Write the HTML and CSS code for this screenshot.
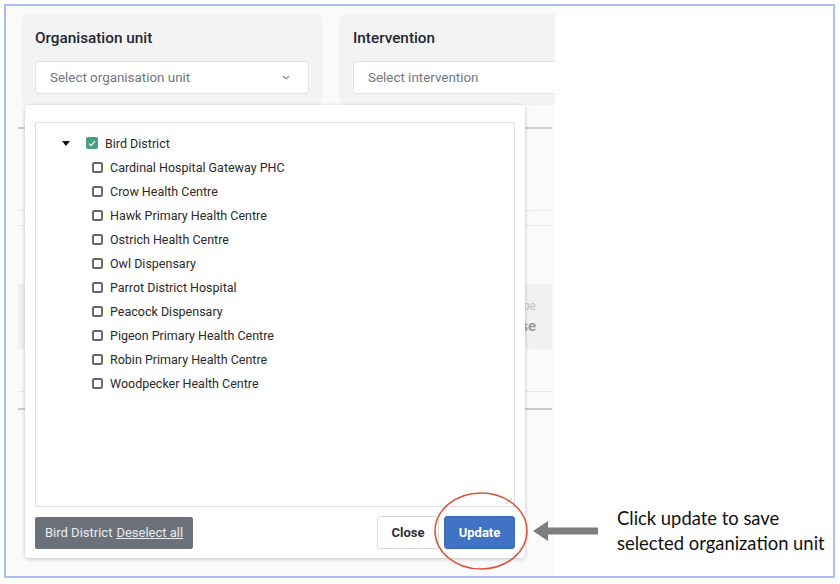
FILE: index.html
```html
<!DOCTYPE html>
<html lang="en">
<head>
<meta charset="utf-8">
<title>Organisation unit selection</title>
<link rel="stylesheet" href="styles.css">
</head>
<body>
<div class="frame">
  <div class="shot">
    <div class="filters">
      <section class="card">
        <h2 class="card-title">Organisation unit</h2>
        <div class="select">
          <span>Select organisation unit</span>
          <svg class="chev" width="8" height="5" viewBox="0 0 8 5"><path d="M1 1 L4 4 L7 1" fill="none" stroke="#8a8f96" stroke-width="1.2"/></svg>
        </div>
      </section>
      <section class="card">
        <h2 class="card-title">Intervention</h2>
        <div class="select"><span>Select intervention</span></div>
      </section>
    </div>

    <div class="table">
      <div class="rule"></div>
      <div class="trow h82"></div>
      <div class="trow h14"></div>
      <div class="gap58"></div>
      <div class="band"><span class="band-sub">Type</span><span class="band-main">Choose</span></div>
      <div class="trow h42"></div>
      <div class="blank16"></div>
      <div class="rule"></div>
    </div>

    <div class="modal">
      <div class="tree-box">
        <div class="row root">
          <span class="caret"></span>
          <span class="cb checked"><svg width="8" height="7" viewBox="0 0 8 7"><path d="M1 3.6 L3 5.6 L7 1.2" fill="none" stroke="#e9f4ef" stroke-width="1.3"/></svg></span>
          <span class="label">Bird District</span>
        </div>
        <div class="row child"><span class="cb"></span><span class="label">Cardinal Hospital Gateway PHC</span></div>
        <div class="row child"><span class="cb"></span><span class="label">Crow Health Centre</span></div>
        <div class="row child"><span class="cb"></span><span class="label">Hawk Primary Health Centre</span></div>
        <div class="row child"><span class="cb"></span><span class="label">Ostrich Health Centre</span></div>
        <div class="row child"><span class="cb"></span><span class="label">Owl Dispensary</span></div>
        <div class="row child"><span class="cb"></span><span class="label">Parrot District Hospital</span></div>
        <div class="row child"><span class="cb"></span><span class="label">Peacock Dispensary</span></div>
        <div class="row child"><span class="cb"></span><span class="label">Pigeon Primary Health Centre</span></div>
        <div class="row child"><span class="cb"></span><span class="label">Robin Primary Health Centre</span></div>
        <div class="row child"><span class="cb"></span><span class="label">Woodpecker Health Centre</span></div>
        <svg class="grip" width="6" height="6" viewBox="0 0 6 6"><path d="M0 6 L6 0" stroke="#c4c4c4" stroke-width="1"/></svg>
      </div>
      <div class="footer">
        <div class="chip">Bird District <u>Deselect all</u></div>
        <div class="actions">
          <button class="btn btn-close">Close</button>
          <button class="btn btn-update">Update</button>
        </div>
      </div>
    </div>
  </div>

  <div class="note">
    <p>Click update to save<br>selected organization unit</p>
  </div>

  <svg class="callout" width="827" height="570" viewBox="0 0 827 570">
    <ellipse cx="475" cy="525" rx="46" ry="38" fill="none" stroke="#d6553c" stroke-width="1.5"/>
    <polygon points="527,525 542,515 542,521.5 592,521.5 592,528.5 542,528.5 542,535" fill="#7e7e7e"/>
  </svg>
</div>
</body>
</html>
```

FILE: styles.css
```css
body {
  margin: 0;
  padding: 4px;
  background: #ffffff;
  font-family: Roboto, "Liberation Sans", sans-serif;
}

.frame {
  width: 827px;
  height: 570px;
  border: 2px solid #a8bff0;
  display: flex;
  position: relative;
}

.shot {
  width: 549px;
  height: 570px;
  flex: none;
  background: #fafafa;
  overflow: hidden;
  position: relative;
}

.filters {
  display: flex;
  gap: 16px;
  padding: 8px 0 0 15px;
}

.card {
  width: 302px;
  flex: none;
  box-sizing: border-box;
  background: #f3f3f3;
  border-radius: 8px;
  padding: 14px 14px 11px;
}

.card-title {
  margin: 0;
  font-size: 15.3px;
  font-weight: 500;
  line-height: 20px;
  color: #1f2731;
}

.select {
  margin-top: 13px;
  height: 33px;
  box-sizing: border-box;
  background: #ffffff;
  border: 1px solid #e3e3e3;
  border-radius: 4px;
  display: flex;
  align-items: center;
  justify-content: space-between;
  padding: 0 18px 0 14px;
  font-size: 13.4px;
  color: #707780;
}

.table {
  margin: 22px 3px 0 12px;
}

.rule {
  height: 2px;
  background: #cdcdcd;
}

.trow {
  border-bottom: 1px solid #e8e8e8;
}
.h82 { height: 81px; }
.h14 { height: 14px; }
.h42 { height: 42px; }
.gap58 { height: 58px; }
.blank16 { height: 16px; }

.band {
  height: 65px;
  background: #f1f1f1;
  display: flex;
  flex-direction: column;
  align-items: flex-end;
  justify-content: center;
  padding-right: 16px;
  gap: 4px;
}
.band-sub { font-size: 12px; color: #c4c4c4; }
.band-main { font-size: 15px; font-weight: 700; color: #9a9a9a; }

.modal {
  position: absolute;
  left: 19px;
  top: 99px;
  width: 500px;
  height: 453px;
  box-sizing: border-box;
  background: #ffffff;
  border-radius: 4px;
  box-shadow: 0 1px 4px rgba(0, 0, 0, 0.22);
  padding: 17px 10px 9px;
  display: flex;
  flex-direction: column;
}

.tree-box {
  height: 385px;
  box-sizing: border-box;
  border: 1px solid #dedede;
  padding-top: 8px;
  position: relative;
}

.grip {
  position: absolute;
  right: 2px;
  bottom: 2px;
}

.row {
  height: 24px;
  display: flex;
  align-items: center;
  font-size: 12.5px;
  color: #2a2a2a;
}

.root { padding-left: 26px; }
.child { padding-left: 56px; }

.caret {
  width: 0;
  height: 0;
  border-left: 4px solid transparent;
  border-right: 4px solid transparent;
  border-top: 5px solid #111111;
  margin-right: 16px;
}

.cb {
  width: 11px;
  height: 11px;
  box-sizing: border-box;
  border: 2px solid #6a6a6a;
  border-radius: 2px;
  background: #ffffff;
  margin-right: 7px;
  flex: none;
}

.cb.checked {
  width: 12px;
  height: 12px;
  border: none;
  background: #4c9c7f;
  display: flex;
  align-items: center;
  justify-content: center;
  margin-right: 7px;
}

.footer {
  margin-top: 9px;
  display: flex;
  justify-content: space-between;
  align-items: center;
}

.chip {
  height: 32px;
  box-sizing: border-box;
  width: 158px;
  background: #6b7178;
  border-radius: 2px;
  color: #e9ecef;
  font-size: 13px;
  display: flex;
  align-items: center;
  padding-left: 10px;
  white-space: nowrap;
}

.chip u { margin-left: 4px; }

.actions {
  display: flex;
  gap: 5px;
}

.btn {
  height: 33px;
  box-sizing: border-box;
  border-radius: 3px;
  font-family: Roboto, "Liberation Sans", sans-serif;
  font-size: 13px;
  font-weight: 700;
  padding: 0;
}

.btn-close {
  width: 62px;
  background: #ffffff;
  border: 1px solid #d8d8d8;
  color: #2f2f2f;
}

.btn-update {
  width: 71px;
  background: #4073c4;
  border: 1px solid #3a69b5;
  color: #ffffff;
}

.note {
  flex: 1;
  display: flex;
  align-items: flex-end;
  padding: 0 0 20px 62px;
}

.note p {
  margin: 0;
  font-family: Lato, "Open Sans", sans-serif;
  font-size: 18.4px;
  line-height: 25px;
  color: #111111;
  white-space: nowrap;
}

.callout {
  position: absolute;
  left: 0;
  top: 0;
  pointer-events: none;
}
```
